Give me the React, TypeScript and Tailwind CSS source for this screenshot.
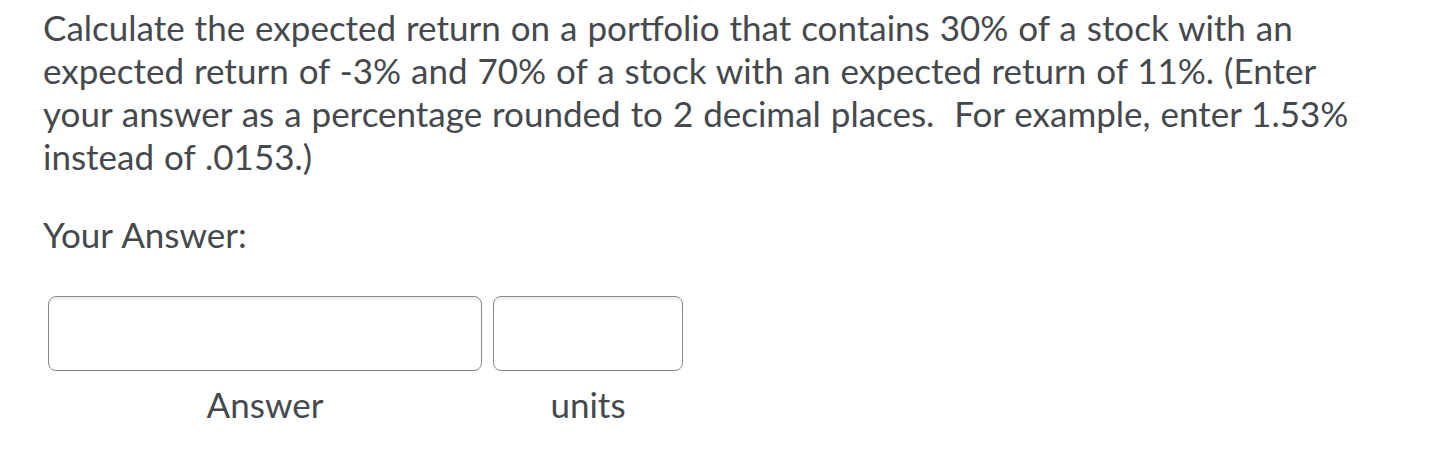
import React from "react";

export default function App() {
  return (
    <div
      className="w-[1440px] h-[458px] bg-white text-[#45494e] overflow-hidden"
      style={{ fontFamily: "Lato, 'Noto Sans', sans-serif" }}
    >
      <div className="pl-[43px] pt-[6px]">
        <p className="text-[35px] leading-[43px] whitespace-nowrap [word-spacing:1px]">
          Calculate the expected return on a portfolio that contains 30% of a stock with an
          <br />
          expected return of -3% and 70% of a stock with an expected return of 11%. (Enter
          <br />
          your answer as a percentage rounded to 2 decimal places.&nbsp; For example, enter 1.53%
          <br />
          instead of .0153.)
        </p>
        <p className="text-[35px] leading-[43px] mt-[35px] [word-spacing:1px]">Your Answer:</p>
        <div className="flex gap-[11px] mt-[40px] ml-[5px]">
          <div className="flex flex-col items-center">
            <div className="w-[434px] h-[75px] rounded-[8px] border border-[#8a8a8a] shadow-[inset_0_3px_2px_rgba(0,0,0,0.06)] bg-white" />
            <span className="text-[35px] leading-[43px] mt-[12px]">Answer</span>
          </div>
          <div className="flex flex-col items-center">
            <div className="w-[190px] h-[75px] rounded-[8px] border border-[#8a8a8a] shadow-[inset_0_3px_2px_rgba(0,0,0,0.06)] bg-white" />
            <span className="text-[35px] leading-[43px] mt-[12px]">units</span>
          </div>
        </div>
      </div>
    </div>
  );
}
